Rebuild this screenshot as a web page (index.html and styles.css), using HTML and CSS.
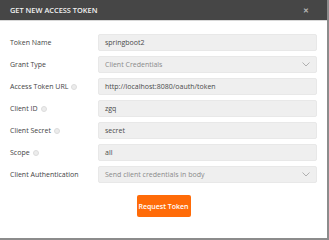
FILE: index.html
```html
<!DOCTYPE html>
<html>
<head>
<meta charset="utf-8">
<link rel="stylesheet" href="styles.css">
</head>
<body>
<div class="dialog">
  <div class="header">
    <span class="title">GET NEW ACCESS TOKEN</span>
    <span class="close">&#x2715;</span>
  </div>
  <div class="form">
    <div class="row"><div class="label">Token Name</div><div class="field">springboot2</div></div>
    <div class="row"><div class="label">Grant Type</div><div class="field select">Client Credentials<svg class="chev" width="8" height="5" viewBox="0 0 8 5"><path d="M0.5 0.5 L4 4 L7.5 0.5" fill="none" stroke="#a8a8a8" stroke-width="0.9"/></svg></div></div>
    <div class="row"><div class="label">Access Token URL <span class="info"></span></div><div class="field">http://localhost:8080/oauth/token</div></div>
    <div class="row"><div class="label">Client ID <span class="info"></span></div><div class="field">zgq</div></div>
    <div class="row"><div class="label">Client Secret <span class="info"></span></div><div class="field">secret</div></div>
    <div class="row"><div class="label">Scope <span class="info"></span></div><div class="field">all</div></div>
    <div class="row"><div class="label">Client Authentication</div><div class="field select">Send client credentials in body<svg class="chev" width="8" height="5" viewBox="0 0 8 5"><path d="M0.5 0.5 L4 4 L7.5 0.5" fill="none" stroke="#a8a8a8" stroke-width="0.9"/></svg></div></div>
    <div class="actions"><button class="btn">Request Token</button></div>
  </div>
</div>
</body>
</html>
```
FILE: styles.css
```css
html, body { margin: 0; padding: 0; background: #fff; }
body { font-family: "Open Sans", "Liberation Sans", sans-serif; }
.dialog {
  width: 327px;
  height: 238px;
  border-right: 2px solid #8c8c8c;
  border-bottom: 2px solid #8c8c8c;
  background: #fff;
  display: flex;
  flex-direction: column;
}
.header {
  height: 20px;
  background: #464646;
  display: flex;
  align-items: center;
  justify-content: space-between;
  padding: 0 18px 0 10px;
  border-bottom: 1px solid #d8d8d8;
}
.title { color: #f2f2f2; font-size: 7.4px; font-weight: 600; }
.close { color: #b5b5b5; font-size: 7px; font-weight: 700; }
.form { padding: 13px 10px 0 10px; display: flex; flex-direction: column; gap: 5px; }
.row { display: flex; align-items: center; height: 17px; }
.label { width: 88px; font-size: 7px; color: #444; display: flex; align-items: center; gap: 3px; }
.info {
  display: inline-block; width: 4px; height: 4px; border-radius: 50%;
  border: 1px solid #dcdcdc; background: #ececec;
}
.field {
  flex: 1; height: 17px; box-sizing: border-box;
  background: #efefef; border: 1px solid #e8e8e8; border-radius: 2px;
  font-size: 7px; color: #4a4a4a; padding-left: 6px;
  display: flex; align-items: center;
}
.field.select { color: #8a8a8a; justify-content: space-between; padding-right: 6px; }
.actions { display: flex; justify-content: center; padding-top: 7px; }
.btn {
  width: 54px; height: 22px; border: none; border-radius: 2px;
  background: #ff6b08; color: #fff; font-family: inherit;
  font-size: 7px; font-weight: 600; padding: 0;
}
```
